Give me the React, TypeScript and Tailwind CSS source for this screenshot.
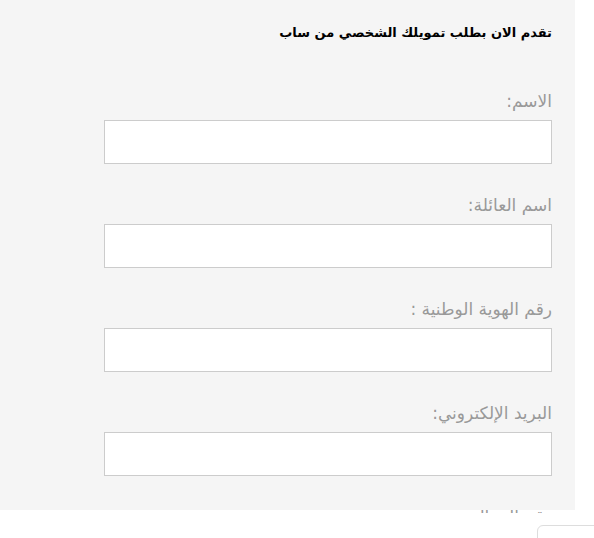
const fields = ['الاسم:', 'اسم العائلة:', 'رقم الهوية الوطنية :', 'البريد الإلكتروني:', 'رقم الجوال:'];

export default function App() {
  return (
    <div className="relative h-[538px] w-[594px] overflow-hidden bg-white" style={{ fontFamily: '"DejaVu Sans", sans-serif' }}>
      <div dir="rtl" className="h-[510px] w-[575px] bg-[#f5f5f5] pr-[23px] pl-[23px] pt-[23px]">
        <h1 className="text-[13px] leading-[20px] font-bold text-black">
          تقدم الان بطلب تمويلك الشخصي من ساب
        </h1>
        <form className="mt-[46px] flex flex-col gap-[29px]">
          {fields.map((label) => (
            <div key={label} className="flex flex-col">
              <label className="mb-[7px] text-[17px] leading-[24px] text-[#999999]">{label}</label>
              <input type="text" className="h-[44px] w-[448px] border border-[#cccccc] bg-white px-3 outline-none" />
            </div>
          ))}
        </form>
      </div>
      <div className="absolute left-0 right-0 top-[513px] h-[25px] bg-white">
        <div className="absolute left-[537px] top-[12px] h-[40px] w-[80px] rounded-tl-[6px] border border-[#dddddd] bg-white" />
      </div>
    </div>
  );
}
